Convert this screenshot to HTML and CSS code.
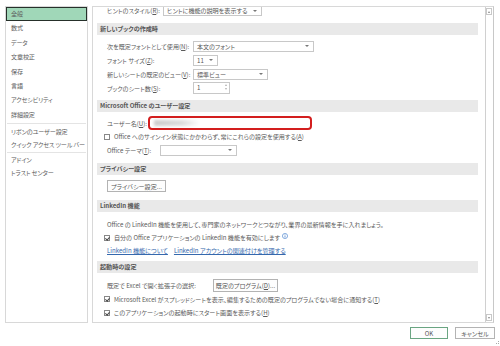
FILE: index.html
```html
<!DOCTYPE html>
<html>
<head>
    <meta charset="utf-8">
    <link rel="stylesheet" href="styles.css">
</head>
<body>
    <div class="dialog">
        <div class="panes">
            <div class="nav">
                <ul class="nav-group">
                    <li class="active">全般</li>
                    <li>数式</li>
                    <li>データ</li>
                    <li>文章校正</li>
                    <li>保存</li>
                    <li>言語</li>
                    <li>アクセシビリティ</li>
                    <li>詳細設定</li>
                </ul>
                <ul class="nav-group second">
                    <li>リボンのユーザー設定</li>
                    <li>クイック アクセス ツール バー</li>
                </ul>
                <ul class="nav-group third">
                    <li>アドイン</li>
                    <li>トラスト センター</li>
                </ul>
            </div>

            <div class="main">
                <div class="scroll">
                    <div class="content">
                        <div class="row first">
                            <span class="label lbl-hint">ヒントのスタイル(<u>R</u>):</span>
                            <span class="combo combo-hint">ヒントに機能の説明を表示する<i class="arrow"></i></span>
                        </div>

                        <div class="head head-1">新しいブックの作成時</div>
                        <div class="row gap-4">
                            <span class="label lbl-new">次を既定フォントとして使用(<u>N</u>):</span>
                            <span class="combo combo-font">本文のフォント<i class="arrow"></i></span>
                        </div>
                        <div class="row">
                            <span class="label lbl-new">フォント サイズ(<u>Z</u>):</span>
                            <span class="combo combo-size">11<i class="arrow"></i></span>
                        </div>
                        <div class="row">
                            <span class="label lbl-new">新しいシートの既定のビュー(<u>V</u>):</span>
                            <span class="combo combo-view">標準ビュー<i class="arrow"></i></span>
                        </div>
                        <div class="row">
                            <span class="label lbl-new">ブックのシート数(<u>S</u>):</span>
                            <span class="combo combo-spin">1<i class="spin"><b class="up"></b><b class="down"></b></i></span>
                        </div>

                        <div class="head head-2">Microsoft Office のユーザー設定</div>
                        <div class="row gap-4">
                            <span class="label lbl-user">ユーザー名(<u>U</u>):</span>
                            <span class="userbox"><span class="blur"></span></span>
                        </div>
                        <div class="row short">
                            <span class="check"></span>
                            <span>Office へのサインイン状態にかかわらず、常にこれらの設定を使用する(<u>A</u>)</span>
                        </div>
                        <div class="row">
                            <span class="label lbl-theme">Office テーマ(<u>T</u>):</span>
                            <span class="combo combo-theme"><i class="arrow"></i></span>
                        </div>

                        <div class="head head-3">プライバシー設定</div>
                        <div class="row gap-4">
                            <span class="button btn-privacy">プライバシー設定...</span>
                        </div>

                        <div class="head head-4">LinkedIn 機能</div>
                        <div class="row gap-5">
                            <span>Office の LinkedIn 機能を使用して、専門家のネットワークとつながり、業界の最新情報を手に入れましょう。</span>
                        </div>
                        <div class="row short">
                            <span class="check checked"></span>
                            <span>自分の Office アプリケーションの LinkedIn 機能を有効にします</span>
                            <svg class="info" viewBox="0 0 10 10" width="6" height="6">
                                <circle cx="5" cy="5" r="4.3" fill="none" stroke="#3b78c9" stroke-width="1"/>
                                <rect x="4.4" y="4.2" width="1.2" height="3.4" fill="#3b78c9"/>
                                <rect x="4.4" y="2.4" width="1.2" height="1.1" fill="#3b78c9"/>
                            </svg>
                        </div>
                        <div class="row short links">
                            <a>LinkedIn 機能について</a>
                            <a>LinkedIn アカウントの関連付けを管理する</a>
                        </div>

                        <div class="head head-5">起動時の設定</div>
                        <div class="row gap-5">
                            <span class="label lbl-ext">既定で Excel で開く拡張子の選択:</span>
                            <span class="button btn-program">既定のプログラム(<u>D</u>)...</span>
                        </div>
                        <div class="row">
                            <span class="check checked"></span>
                            <span>Microsoft Excel がスプレッドシートを表示、編集するための既定のプログラムでない場合に通知する(<u>T</u>)</span>
                        </div>
                        <div class="row short">
                            <span class="check checked"></span>
                            <span>このアプリケーションの起動時にスタート画面を表示する(<u>H</u>)</span>
                        </div>
                    </div>
                </div>

                <div class="scrollbar">
                    <span class="sb-btn"><i class="tri-up"></i></span>
                    <span class="sb-btn"><i class="tri-down"></i></span>
                </div>
            </div>
        </div>

        <div class="footer">
            <span class="button btn-ok">OK</span>
            <span class="button btn-cancel">キャンセル</span>
        </div>
        <div class="grip"></div>
    </div>
</body>
</html>
```

FILE: styles.css
```css
* {
    margin: 0;
    padding: 0;
    box-sizing: border-box;
}

body {
    background: #fff;
    color: #5a5a5a;
    font-family: "Noto Sans CJK JP", "Noto Sans", sans-serif;
    font-size: 6.1px;
    font-feature-settings: "palt";
    overflow: hidden;
}

u {
    text-decoration: underline;
}

.dialog {
    width: 500px;
    height: 346px;
    padding: 6px 6px 0 5px;
    display: flex;
    flex-direction: column;
    position: relative;
}

.panes {
    display: flex;
    gap: 4px;
    height: 317px;
}

/* left navigation */
.nav {
    width: 83px;
    border: 1px solid #d8d8d8;
}

.nav-group {
    list-style: none;
}

.nav-group li {
    height: 14.4px;
    line-height: 14.4px;
    padding-left: 5px;
    white-space: nowrap;
    color: #5c5c5c;
    letter-spacing: -0.15px;
}

.nav-group li.active {
    background: #a0d7b8;
    border: 1px solid #26302a;
    line-height: 12.4px;
    padding-left: 4px;
}

.nav-group.second,
.nav-group.third {
    border-top: 1px solid #e4e4e4;
    margin: 0 1px;
}

.nav-group.second {
    margin-top: 0.5px;
    padding-top: 1px;
}

.nav-group.second li,
.nav-group.third li {
    height: 13.5px;
    line-height: 13.5px;
    padding-left: 4px;
}

/* main panel */
.main {
    flex: 1;
    display: flex;
    border: 1px solid #d8d8d8;
    border-right-color: #c8c8c8;
}

.scroll {
    flex: 1;
    overflow: hidden;
    padding: 0 7px 0 4px;
}

.row {
    height: 14px;
    display: flex;
    align-items: center;
    padding-left: 10px;
    white-space: nowrap;
}

.row.first {
    height: 10px;
    align-items: flex-start;
}

.row.short {
    height: 13px;
}

.row.gap-4 { margin-top: 4px; }
.row.gap-5 { margin-top: 5px; }

.head {
    height: 12px;
    line-height: 12px;
    background: #e9e9e9;
    padding-left: 3px;
    font-weight: 700;
    color: #555;
}

.head-1 { margin-top: 6px; }
.head-2 { margin-top: 5px; }
.head-3 { margin-top: 6px; }
.head-4 { margin-top: 7px; }
.head-5 { margin-top: 4px; }

.label {
    flex: none;
}

.first .label {
    line-height: 8px;
}

.lbl-hint { width: 56px; }
.lbl-new { width: 86px; }
.lbl-user { width: 41px; }
.lbl-theme { width: 53px; }
.lbl-ext { width: 106px; }

/* form controls */
.combo {
    position: relative;
    height: 11px;
    line-height: 9px;
    border: 1px solid #c8c8c8;
    background: #fff;
    padding-left: 3px;
    color: #555;
}

.combo-hint {
    width: 99px;
    height: 9px;
    line-height: 8px;
    border-top: none;
}

.combo-hint .arrow { top: 3px; }

.combo-font { width: 121px; }
.combo-size { width: 25px; }
.combo-view { width: 75px; }
.combo-spin { width: 37px; height: 12px; line-height: 10px; }
.combo-theme { width: 77px; }

.arrow {
    position: absolute;
    right: 4px;
    top: 3.5px;
    border-top: 2.5px solid #777;
    border-left: 2px solid transparent;
    border-right: 2px solid transparent;
}

.spin {
    position: absolute;
    right: 2px;
    top: 1px;
    display: flex;
    flex-direction: column;
    gap: 2px;
}

.spin b {
    display: block;
    border-left: 1.5px solid transparent;
    border-right: 1.5px solid transparent;
}

.spin .up { border-bottom: 2px solid #b0b0b0; }
.spin .down { border-top: 2px solid #b0b0b0; }

.userbox {
    position: relative;
    width: 164px;
    height: 14px;
    border: 2px solid #d31e1e;
    border-radius: 4px;
    overflow: hidden;
}

.blur {
    position: absolute;
    left: 4px;
    top: 2px;
    width: 46px;
    height: 6px;
    background: linear-gradient(90deg, #cdcdcd, #dcdcdc 60%, #fff);
    filter: blur(1.5px);
}

.check {
    position: relative;
    flex: none;
    width: 6px;
    height: 6px;
    border: 1px solid #888;
    margin: 0 4px 0 -3px;
    background: #fff;
}

.check.checked::after {
    content: "";
    position: absolute;
    left: 1px;
    top: 0;
    width: 1.5px;
    height: 3px;
    border-right: 1px solid #444;
    border-bottom: 1px solid #444;
    transform: rotate(40deg);
}

.info {
    margin-left: 2px;
    margin-top: -3px;
}

.links {
    gap: 6px;
}

.links a {
    color: #3568ad;
    text-decoration: underline;
}

.button {
    display: inline-flex;
    align-items: center;
    justify-content: center;
    height: 12px;
    border: 1px solid #b3b3b3;
    background: #fdfdfd;
    color: #555;
}

.btn-privacy { width: 59px; }
.btn-program { width: 65px; height: 13px; }

/* scrollbar */
.scrollbar {
    width: 8px;
    border-left: 1px solid #d0d0d0;
    display: flex;
    flex-direction: column;
    justify-content: space-between;
    padding: 1px 0;
}

.sb-btn {
    display: flex;
    align-items: center;
    justify-content: center;
    width: 6px;
    height: 7px;
    border: 1px solid #c8c8c8;
}

.tri-up,
.tri-down {
    border-left: 1.5px solid transparent;
    border-right: 1.5px solid transparent;
}

.tri-up { border-bottom: 2px solid #888; }
.tri-down { border-top: 2px solid #888; }

/* footer */
.footer {
    display: flex;
    justify-content: flex-end;
    gap: 7px;
    margin-top: 4px;
    margin-right: -1px;
}

.btn-ok {
    width: 38px;
    border-color: #6aa582;
}

.btn-cancel {
    width: 40px;
}

.grip {
    position: absolute;
    right: 1px;
    bottom: 2px;
    width: 3px;
    height: 3px;
    border-right: 1px dotted #aaa;
    border-bottom: 1px dotted #aaa;
}
```
